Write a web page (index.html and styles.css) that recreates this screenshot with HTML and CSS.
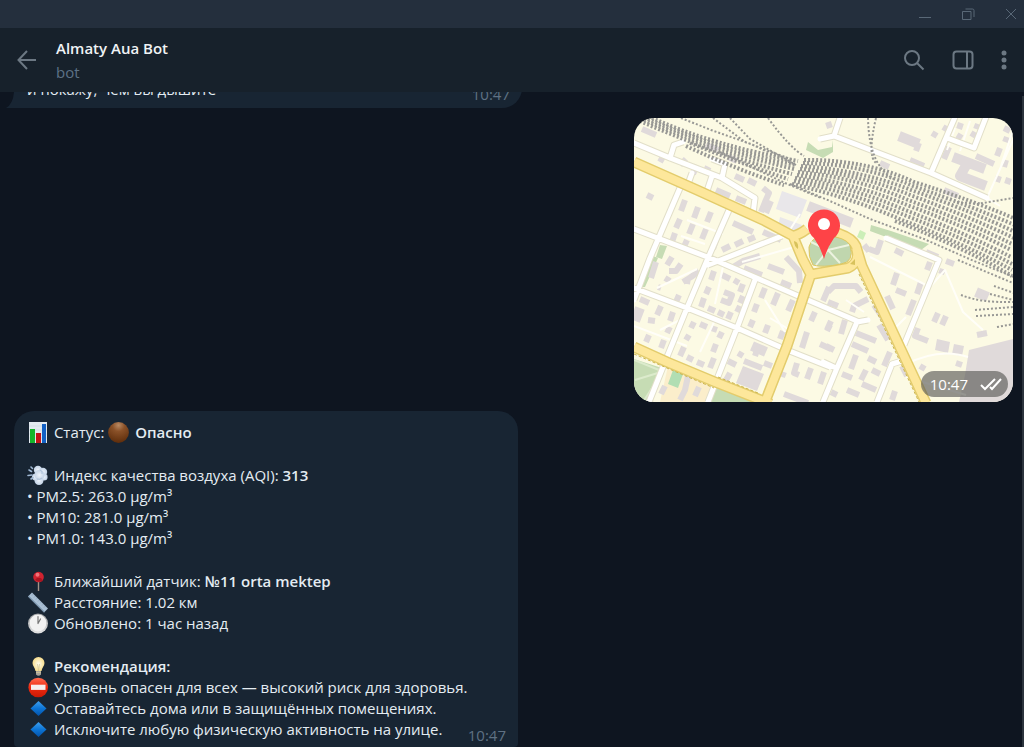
FILE: index.html
```html
<!DOCTYPE html>
<html lang="ru">
<head>
<meta charset="UTF-8" />
<meta name="viewport" content="width=device-width, initial-scale=1" />
<title>Almaty Aua Bot</title>
<link rel="stylesheet" href="styles.css">
</head>
<body>
<!-- Emoji and icon symbols -->
<svg class="defs" aria-hidden="true">
  <defs>
    <radialGradient id="brown" cx="50%" cy="15%" r="85%"><stop offset="0" stop-color="#b98a63"/><stop offset=".35" stop-color="#8a5128"/><stop offset="1" stop-color="#5e2d0b"/></radialGradient>
    <linearGradient id="blueTop" x1="0" y1="0" x2="0" y2="1"><stop offset="0" stop-color="#3fa0ee"/><stop offset=".5" stop-color="#0c74d4"/><stop offset="1" stop-color="#0452a8"/></linearGradient>
    <radialGradient id="cloud"><stop offset="0" stop-color="#eef4fb"/><stop offset="1" stop-color="#c3d3e6"/></radialGradient>
    <linearGradient id="rim" x1="0" y1="0" x2="0" y2="1"><stop offset="0" stop-color="#9a9c9e"/><stop offset="1" stop-color="#e4e4e4"/></linearGradient>
    <radialGradient id="bulb"><stop offset="0" stop-color="#fffef0"/><stop offset="1" stop-color="#f6dd8d"/></radialGradient>
    <linearGradient id="stop" x1="0" y1="0" x2="0" y2="1"><stop offset="0" stop-color="#ff6a50"/><stop offset=".5" stop-color="#ee2a10"/><stop offset="1" stop-color="#c91a05"/></linearGradient>
  </defs>
  <symbol id="e-chart" viewBox="0 0 21 21">
    <path d="M2 0h18v21H2z" fill="#e3eaf0"/>
    <path d="M2 4h18M2 8h18M2 12h18M2 16h18" stroke="#cbd6e0" stroke-width=".6"/>
    <path d="M3 7h5v14H3z" fill="#14b52a"/><path d="M9 11h5v10H9z" fill="#c21317"/><path d="M15 2h4v19h-4z" fill="#1260c4"/>
  </symbol>
  <symbol id="e-circle" viewBox="0 0 21 21"><circle cx="10.5" cy="10.5" r="10.4" fill="url(#brown)"/></symbol>
  <symbol id="e-wind" viewBox="0 0 21 21">
    <g fill="url(#cloud)"><circle cx="11" cy="5" r="4.2"/><circle cx="16" cy="7" r="4.2"/><circle cx="17" cy="12" r="3.6"/><circle cx="12" cy="15.5" r="4.5"/><circle cx="8.5" cy="12" r="3.5"/><circle cx="12.5" cy="10" r="5"/></g>
    <path d="M2 5l2.5 1.500M4 2l1.500 1.500M1 10.500l4-.5M4 14l2-1.500" stroke="#9fb8d4" stroke-width="1.6" stroke-linecap="round"/>
    <path d="M13 5q3 1 2 4M10 14q3 1 5-1" fill="none" stroke="#a7bcd4" stroke-width=".8"/>
  </symbol>
  <symbol id="e-pin" viewBox="0 0 21 21">
    <path d="M11.5 9v11" stroke="#a59388" stroke-width="1.4"/><circle cx="11.5" cy="6" r="5.3" fill="#cf2330"/>
    <path d="M8 9l2-2h4l2 3q-4 2-8-1" fill="#a91420"/><circle cx="10.5" cy="3.8" r="2" fill="#f0747a"/>
  </symbol>
  <symbol id="e-ruler" viewBox="0 0 21 21">
    <path d="M5 .5L21 16.500 17 20.500 1 4.500z" fill="#a9bfd4"/><path d="M1 4.500l16 16 .8-.8-16-16z" fill="#7892ab"/>
    <path d="M6.500 2L5 3.500M8.500 4L7 5.500M10.500 6L9 7.500M12.500 8L11 9.500M14.500 10L13 11.500M16.500 12L15 13.500M18.500 14L17 15.500" stroke="#7d95ad" stroke-width=".6"/>
  </symbol>
  <symbol id="e-clock" viewBox="0 0 21 21">
    <circle cx="11" cy="10.5" r="10" fill="url(#rim)"/><circle cx="11" cy="10" r="8.4" fill="#f2f2f2"/>
    <path d="M11 10.500V3.500M11 10.500L13.500 6" stroke="#777" stroke-width="1.2" stroke-linecap="round"/>
  </symbol>
  <symbol id="e-bulb" viewBox="0 0 21 21">
    <path d="M11.5 1a6 6 0 0 1 6 6c0 3-2.500 4.500-3 8h-6C8 11.500 5.500 10 5.500 7a6 6 0 0 1 6-6z" fill="url(#bulb)"/>
    <path d="M9 15h5v3.500q-2.500 2.500-5 0z" fill="#a6a39a"/><path d="M9 16.500h5M10.500 8l1 7 1-7" stroke="#d6c894" stroke-width=".7" fill="none"/>
  </symbol>
  <symbol id="e-stop" viewBox="0 0 21 21"><circle cx="11.2" cy="10.5" r="9.8" fill="url(#stop)"/><path d="M4 7.700h14.500v5.200H4z" fill="#f5eeee"/></symbol>
  <symbol id="e-diamond" viewBox="0 0 21 21"><path d="M11.5 3l8 7.500-8 7.500-8-7.500z" fill="url(#blueTop)"/></symbol>
</svg>

<div class="window">
  <div class="titlebar">
    <button type="button" aria-label="Свернуть"><svg width="14" height="14"><path d="M1 10.500h12"/></svg></button>
    <button type="button" aria-label="Развернуть"><svg width="14" height="14"><path d="M1.500 4.500h8.500v8H1.500zM4.500 2h7q1.500 0 1.500 1.500V10"/></svg></button>
    <button type="button" aria-label="Закрыть"><svg width="14" height="14"><path d="M2 2l10 10M12 2L2 12"/></svg></button>
  </div>

  <header class="chat-header">
    <button type="button" aria-label="Назад"><svg width="20" height="20"><path d="M10 1L1.500 10 10 19M1.500 10H19"/></svg></button>
    <div class="chat-info">
      <h1>Almaty Aua Bot</h1>
      <span>bot</span>
    </div>
    <div class="chat-actions">
      <button type="button" aria-label="Поиск"><svg width="22" height="22"><circle cx="9" cy="9" r="7"/><path d="M14 14l6.500 6.500"/></svg></button>
      <button type="button" aria-label="Боковая панель"><svg width="22" height="22"><rect x="1.5" y="2.5" width="19" height="17" rx="3"/><path d="M15 2.500v17"/></svg></button>
      <button type="button" aria-label="Меню"><svg class="dots" width="6" height="22"><circle cx="3" cy="4" r="2.5"/><circle cx="3" cy="11" r="2.5"/><circle cx="3" cy="18" r="2.5"/></svg></button>
    </div>
  </header>

  <main class="messages">
    <article class="message first">
      <svg class="tail" width="9" height="16" aria-hidden="true"><path d="M9 0v16H0Q7 12 8 0z"/></svg>
      <p>и покажу, чем вы дышите</p>
      <time>10:47</time>
    </article>

    <article class="location">
      <svg class="map" viewBox="634 118 379 284" preserveAspectRatio="xMidYMid slice" role="img" aria-label="Карта">
        <path d="M634 118h379v284H634z" fill="#fcfae4"/>
        <!-- Parks and yards -->
        <g fill="#c6dcb4">
          <path d="M634 359l31 10-16 33h-15zM716 385l42 16v2h-49zM808 142l10 8 14-3 1-7 0 12-10 6-17-8zM871 225l20 6 38 13-8 6-51-19zM653 256l5 2-13 29-5 0zM803 281l7-3-3 16-7-3zM660 245l7 1-5 13-6-2z"/>
        </g>
        <path d="M668 366l45 17-7 19h-46z" fill="#fbeecb"/>
        <path d="M673 370l10 4-5 14-10-4z" fill="#b1deb3"/>
        <path d="M860 230l6 3-3 7-6-3z" fill="#ccefb8"/>
        <path d="M782 191l25 9-7 18-24-9zM780 217l22 8-5 10-19-8z" fill="#e9e7ea"/>
        <path d="M969 350l44-11v63h-54l6-27z" fill="#e0dada"/>
        <path d="M634 360l30 12M635 380l26-8M643 402l18-28" stroke="#dcebcc" stroke-width="2"/>

        <!-- Buildings -->
        <path class="building-wide" d="M953 157l32 12M968 162l-8 14 26 10M640 308l-5 13M752 346l14 6M976 292l12 5M899 136l20 8M808 206l44 17"/>
        <path d="M743 366l21 8-7 17-21-8zM937 339l13 3-2 11-13-3zM954 344l10 2-2 10-10-2z" fill="#e0dada"/>
        <path class="building" d="M642 129l14 6M660 162l5-9M685 200l-4 11M698 207l-4 11M711 212l-4 10M680 219l-4 9M693 224l-4 10M706 229l-4 10M675 233l-3 9M687 240l-4 9M719 232l-6 17M733 223l20 9M722 250l8-4M735 245l8-4M748 240l7-3M680 165l6-6M697 165l-4 9M704 168l6 3M706 145l12 5M728 157l9 4M735 176l9 4M748 180l8 4M763 188l6 5-4 9-4 10M771 201l-5 12M716 190l14 6M736 198l10 4M718 202l8 3M763 232l18 8M647 195l6 3"/>
        <path class="building" d="M919 143l-3 8M910 160l14 6M880 163l9 4M944 190l14 6M943 127l5 3M961 123l-2 6M957 135l5 3M971 133l5 3M976 156l18 8M949 147l-5 12M1000 148l-3 8M1007 137l-2 5M1006 160l-2 7M999 176l-2 6M1009 178l-2 6M828 122l2 6M978 124l-2 5M864 245l5 6M881 240l-4 12-8-3M895 250l8 4M926 252l12 5M1004 128l6 3M932 133l5 3"/>
        <path class="building" d="M656 262l-5 16M672 257l-5 8M681 264l-5 7-7 0M670 281l-5-3M683 282l8-5 8-6M688 278l-1 6M679 295l-3 7M658 287l3 1M714 271l-3 9M722 275l8 4M734 280l5 3M743 284l-3 8M709 287l-3 7M704 298l-3 9M708 308l7 3M718 312l6 3M731 312l-3 7M740 306l-3 6M743 296l-3 7M724 292l8 3-3 8-8-3M765 288l-4 10M778 293l-5 12M793 300l-5 11M757 304l-3 8M753 320l-3 7M768 325l-3 8M783 331l-3 8M733 267l10-6 17-5M744 268l18 7M768 266l16 6M781 282l10 4M786 257l13 14 1 12"/>
        <path class="building" d="M640 299l9 4M661 306l-4 9M673 312l-3 9M648 320l7 1M670 327l-3 6M649 335l-3 7M664 340l-3 8M694 322l-3 6M700 324l7 3M711 328l6 2M689 335l-3 5M722 332l-3 6M716 344l-3 8M684 347l-4 9M687 357l6 3M697 362l7 3M714 358l-4 10M738 353l5 3M728 361l8 4M730 373l-5 9M744 361l18 7M764 363l8 3M758 347l-3 9M688 376l-3 14-5 10M695 396l4-9M665 386l-4 8"/>
        <path class="building" d="M815 312l-4 9M807 332l-5 16M820 344l11 5M829 287l-6 14M830 325l-3 6M797 363l-3 10 5 2M811 368l-4 11M824 372l-4 12M784 394l24 9M784 372l-2 5M828 292l6-6h22l5 6M868 299l-14 7-2 6M831 321l-4 9M845 320l-4 14M828 302l10 4M856 333l20 8M852 344l16 7M826 346l8 4M874 305l9 13M887 296l6 13M879 325l9 15M897 273l-4 12M896 290l10 4M914 300l-6 15M921 282l-4 12M930 262l-3 8M946 261l8 3M943 269l-2 5M938 313l-4 9M946 316l-4 9M918 328l-3 8 13 5M977 335l10-2M956 363l6 2M856 355l-5 14M868 358l8 4M890 352l-6 14M872 370l8 4M842 374l10 4M847 390l12 5M862 384l14 6M895 391l-3 9M902 366l5 10M866 370l-5 10M831 392l6 3M924 365l-3 5"/>

        <!-- Paths -->
        <path class="footpath" d="M657 288l40-19M687 220l36 14M681 236l24 8M730 212l-8 20M660 330l20-10M634 326l53 20M700 352l16-34M724 262l-9 42M770 318l20 12M765 300l20 32M870 257l60 30 15-17 18 42 20 18M904 365q35-18 64-8M987 198l26-58M987 198l13 8M970 121l-10 30M1013 130l-12 36M800 214l-14 22M955 128l-8 22M966 395l-60-18M888 335l18-18M846 300l18 12M742 262l52-15"/>

        <!-- Streets -->
        <path class="street-edge" d="M634 143l36 15 52 20 33 20-2 16M670 158l4-13 9-3M722 178l3-14-13-5M706 194l6-18M688 184l4-11M680 188l-30 70-16 42M729 210l-21 48-21 50-20 49-18 45M634 229l76 29 93 40 54 23M782 236l-74 29M634 288l53 20 50 20 50 22 43 17M755 280l-18 48-29 74M868 320l-11 2-20 46-14 34M823 362l13 6M886 238l53 22-35 85M905 360l-13 4-15 38M820 139l14-3 97 37 56 25M834 136l6-18M931 173l24-56M947 138l27 10 12-31"/>
        <path class="street" d="M634 143l36 15 52 20 33 20-2 16M670 158l4-13 9-3M722 178l3-14-13-5M706 194l6-18M688 184l4-11M680 188l-30 70-16 42M729 210l-21 48-21 50-20 49-18 45M634 229l76 29 93 40 54 23M782 236l-74 29M634 288l53 20 50 20 50 22 43 17M755 280l-18 48-29 74M868 320l-11 2-20 46-14 34M823 362l13 6M886 238l53 22-35 85M905 360l-13 4-15 38M820 139l14-3 97 37 56 25M834 136l6-18M931 173l24-56M947 138l27 10 12-31"/>

        <!-- Railway -->
        <path class="rail" d="M652 118q60 27 146 43M648 119q70 30 148 46M644 120q70 30 150 49M640 121q72 32 152 53M690 143q50 20 98 36M686 146q52 24 98 39"/>
        <path class="rail thin" d="M681 118l30 12 40 14 42 20M713 118l32 24 48 18M730 118l20 21 46 26M768 118q22 30 36 38M720 152l65 31 36 15M868 118q1 50 28 62M876 118q-9 38 0 45M957 202l20 2 36-6M790 184l40 17 40 18 54 20 50 22 40 16"/>
        <path class="rail" d="M804 160q60-1 110 22 60 19 104 38M803 163q60 1 110 23 60 21 104 40M801 166q60 4 110 24 60 21 104 42M800 169q60 5 110 26 60 22 104 43M798 172q60 6 110 28 60 22 104 44M797 175q60 9 110 30 60 22 104 45M795 178q60 10 110 32 60 23 106 47M794 181q60 12 110 34 60 23 108 49M792 184q60 14 110 36 60 23 110 50M895 221q70 27 117 55"/>
        <path class="rail thin" d="M958 260l55 23M994 286l20 7M961 295q20 8 52 7M990 294l23 6M975 310l38-3M976 316l37-2M997 327l17-3"/>

        <!-- Main roads -->
        <path class="road-edge" d="M634 162l63 28 66 30 30 16 10 24 8 15M793 236q6-1 14-7M812 228q16 0 28 6 12 4 16 12l6 20 64 137M856 248q5 14-8 20l-40 7M811 274l-24 72-22 56M634 347l33 15 48 20 56 22"/>
        <path class="road" d="M634 162l63 28 66 30 30 16 10 24 8 15M793 236q6-1 14-7M812 228q16 0 28 6 12 4 16 12l6 20 64 137M856 248q5 14-8 20l-40 7M811 274l-24 72-22 56M634 347l33 15 48 20 56 22"/>
        <path d="M634 354l80 34M859 274l60 128M718 377l40 16" fill="none" stroke="#cdb54e" stroke-dasharray="3 2"/>
        <path d="M809 247q3-12 18-11 18 1 23 9 5 17-9 19-19 4-28 1-5-8-4-18z" fill="#c0d6ae" stroke="#dfc75f"/>
        <path d="M828 250l-17-8M828 250l21-5M828 250l-12 15M828 250l12 13" stroke="#ecf2df" stroke-width="2"/>
        <path d="M794 241q5 1 4 8-4-3-4-8zM850 264l5-5v6z" fill="#d8c25c"/>

        <!-- Marker -->
        <path d="M824 259q-3-11-10-21a16 16 0 1 1 20 0q-7 10-10 21z" fill="#fe4347"/>
        <circle cx="824" cy="224" r="6" fill="#fff"/>
      </svg>
      <div class="badge">
        <time>10:47</time>
        <svg width="22" height="14" aria-hidden="true"><path d="M1 8l4 4L15 2M10 10l2 2L21 2"/></svg>
      </div>
    </article>

    <article class="message report">
      <p><svg class="emoji"><use href="#e-chart"/></svg> Статус: <svg class="emoji"><use href="#e-circle"/></svg> <b>Опасно</b></p>
      <p>
        <svg class="emoji"><use href="#e-wind"/></svg> Индекс качества воздуха (AQI): <b>313</b><br>
        • PM2.5: 263.0 µg/m³<br>
        • PM10: 281.0 µg/m³<br>
        • PM1.0: 143.0 µg/m³
      </p>
      <p>
        <svg class="emoji"><use href="#e-pin"/></svg> Ближайший датчик: <b>№11 orta mektep</b><br>
        <svg class="emoji"><use href="#e-ruler"/></svg> Расстояние: 1.02 км<br>
        <svg class="emoji"><use href="#e-clock"/></svg> Обновлено: 1 час назад
      </p>
      <p>
        <svg class="emoji"><use href="#e-bulb"/></svg> <b>Рекомендация:</b><br>
        <svg class="emoji"><use href="#e-stop"/></svg> Уровень опасен для всех — высокий риск для здоровья.<br>
        <svg class="emoji"><use href="#e-diamond"/></svg> Оставайтесь дома или в защищённых помещениях.<br>
        <svg class="emoji"><use href="#e-diamond"/></svg> Исключите любую физическую активность на улице.
      </p>
      <time>10:47</time>
    </article>
    <div class="scrollbar"></div>
  </main>
</div>
</body>
</html>
```
FILE: styles.css
```css
/* --- RESET & BASIC STYLE --- */
*, *::before, *::after {
  box-sizing: border-box;
}
body {
  margin: 0;
  background: #0e1520;
  color: #e4ecf2;
  font-family: "Open Sans", "Noto Sans", sans-serif;
  font-size: 15px;
  line-height: 21px;
}
h1, p {
  margin: 0;
}
button {
  display: flex;
  padding: 0;
  border: none;
  background: none;
  color: inherit;
  cursor: pointer;
}
svg {
  display: block;
  flex: none;
}
.defs {
  position: absolute;
  width: 0;
  height: 0;
}
.window {
  display: flex;
  flex-direction: column;
  height: 100vh;
}
/* --- TITLE BAR --- */
.titlebar {
  display: flex;
  flex: none;
  justify-content: flex-end;
  align-items: center;
  gap: 29px;
  height: 28px;
  padding-right: 6px;
  background: #242f3d;
  color: #596877;
}
.titlebar svg,
.chat-header svg {
  fill: none;
  stroke: currentColor;
}
/* --- CHAT HEADER --- */
.chat-header {
  display: flex;
  flex: none;
  align-items: center;
  gap: 19px;
  height: 64px;
  padding: 0 17px;
  background: #17212b;
  color: #6c7883;
}
.chat-header svg {
  stroke-width: 2;
}
.chat-header .dots {
  fill: currentColor;
  stroke: none;
}
.chat-info {
  flex: 1;
}
.chat-info h1 {
  margin-bottom: 3px;
  color: #f0f3f5;
  font-size: 15px;
  font-weight: 600;
  line-height: 21px;
}
.chat-info span {
  display: block;
  color: #5d7186;
}
.chat-actions {
  display: flex;
  gap: 27px;
}
/* --- MESSAGES --- */
.messages {
  position: relative;
  display: flex;
  flex: 1;
  flex-direction: column;
  justify-content: flex-end;
  gap: 9px;
  min-height: 0;
  padding: 0 11px 0 14px;
  overflow: hidden;
}
.message {
  display: flex;
  position: relative;
  flex: none;
  align-self: flex-start;
  width: 504px;
  max-width: 100%;
  padding: 11px 12px 7px 13px;
  border-radius: 20px;
  background: #182533;
}
.message time {
  position: absolute;
  right: 12px;
  bottom: 1px;
  color: #5f7183;
}
.first {
  width: 508px;
  margin-bottom: 1px;
  padding-bottom: 8px;
  border-bottom-left-radius: 0;
}
.first time {
  bottom: 3px;
}
.tail {
  position: absolute;
  left: -8px;
  bottom: 0;
  fill: #182533;
}
.report {
  flex-direction: column;
  gap: 22px;
  border-bottom-left-radius: 4px;
  border-bottom-right-radius: 4px;
}
.report b {
  font-weight: 600;
}
.emoji {
  display: inline-block;
  width: 21px;
  height: 21px;
  margin-right: 2px;
  vertical-align: top;
}
/* --- LOCATION --- */
.location {
  position: relative;
  flex: none;
  align-self: flex-end;
  width: 379px;
  max-width: 100%;
  border-radius: 20px;
  overflow: hidden;
}
.map {
  width: 100%;
  height: 284px;
}
.map path {
  stroke-linejoin: round;
}
.building,
.building-wide,
.footpath,
.street,
.street-edge,
.road,
.road-edge,
.rail {
  fill: none;
}
.building {
  stroke: #e0dada;
  stroke-width: 6;
}
.building-wide {
  stroke: #e0dada;
  stroke-width: 10;
}
.footpath {
  stroke: #fffef8;
  stroke-width: 2;
}
.street-edge {
  stroke: #e2dfc9;
  stroke-width: 7;
}
.street {
  stroke: #fff;
  stroke-width: 5;
  stroke-linecap: round;
}
.rail {
  stroke: #989895;
  stroke-width: 4;
  stroke-dasharray: 2 2;
}
.rail.thin {
  stroke-width: 2;
}
.road-edge {
  stroke: #e3cc6c;
  stroke-width: 11;
}
.road {
  stroke: #fde79b;
  stroke-width: 8;
}
.badge {
  position: absolute;
  right: 5px;
  bottom: 5px;
  display: flex;
  align-items: center;
  gap: 12px;
  height: 26px;
  padding: 0 6px 0 9px;
  border-radius: 13px;
  background: rgba(90, 90, 88, .65);
  color: #fff;
}
.badge svg {
  fill: none;
  stroke: #fff;
  stroke-width: 2;
}
/* Thin scrollbar on the right edge */
.scrollbar {
  position: absolute;
  top: 4px;
  right: 0;
  bottom: 0;
  width: 2px;
  background: #2b333c;
}
```
